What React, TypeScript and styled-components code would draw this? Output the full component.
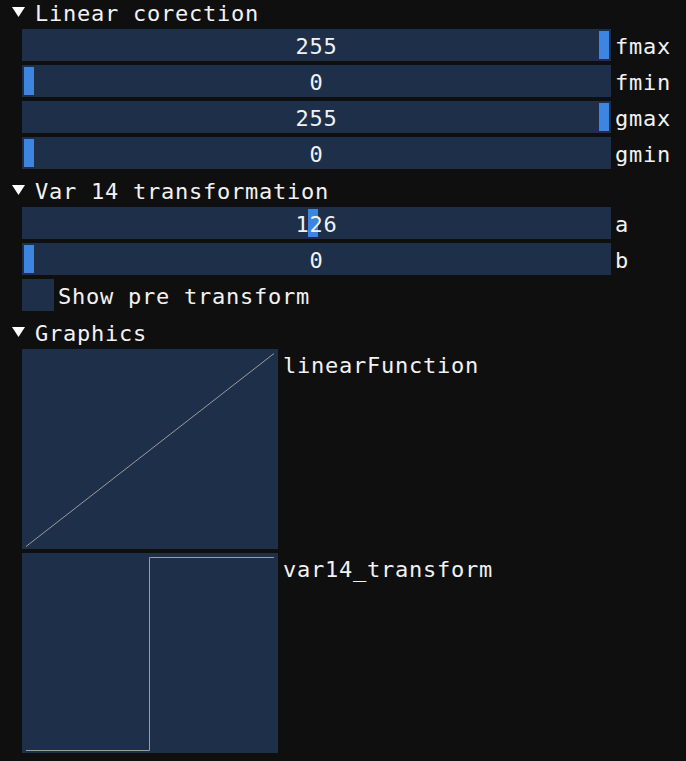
import React from "react";
import styled, { createGlobalStyle } from "styled-components";

const Global = createGlobalStyle`
  html, body { margin: 0; padding: 0; background: #0f0f0f; }
  body { width: 686px; height: 761px; overflow: hidden; }
`;

const FONT = `"DejaVu Sans Mono", "Liberation Mono", monospace`;

const Window = styled.div`
  width: 686px;
  height: 761px;
  background: #0f0f0f;
  color: #f2f2f2;
  font-family: ${FONT};
  font-size: 22px;
  letter-spacing: 0.76px;
  overflow: hidden;
`;

const Content = styled.div`
  display: flex;
  flex-direction: column;
  gap: 4px;
  margin-top: -5px;
`;

const Header = styled.div`
  height: 30px;
  display: flex;
  align-items: flex-start;
  padding-left: 12px;
  gap: 10px;
  box-sizing: border-box;
  overflow: hidden;
`;

const Arrow = styled.svg`
  width: 13px;
  height: 10px;
  margin-top: 12px;
  flex: none;
`;

const HeaderText = styled.span`
  line-height: 23px;
  padding-top: 7px;
  white-space: pre;
`;

const Row = styled.div`
  display: flex;
  align-items: flex-start;
  height: 32px;
  gap: 4px;
  padding-left: 22px;
`;

const Frame = styled.div`
  position: relative;
  width: 589px;
  height: 32px;
  background: rgb(29, 47, 73);
  flex: none;
`;

const Grab = styled.div`
  position: absolute;
  top: 2px;
  bottom: 2px;
  width: 10px;
  background: #3d85e0;
`;

const Value = styled.div`
  position: absolute;
  inset: 0;
  text-align: center;
  line-height: 29px;
  padding-top: 3px;
  white-space: pre;
`;

const Label = styled.span`
  line-height: 29px;
  padding-top: 3px;
  white-space: pre;
`;

const Check = styled.div`
  width: 32px;
  height: 32px;
  background: rgb(29, 47, 73);
  flex: none;
`;

const PlotRow = styled.div`
  display: flex;
  align-items: flex-start;
  gap: 5px;
  padding-left: 22px;
`;

const PlotFrame = styled.svg`
  width: 256px;
  height: 200px;
  background: rgb(29, 47, 73);
  display: block;
  flex: none;
`;

const PlotLabel = styled.span`
  line-height: 24px;
  margin-top: 5px;
  white-space: pre;
`;

const HeaderArrow = () => (
  <Arrow viewBox="0 0 13 10">
    <polygon points="0,0 13,0 6.5,10" fill="#ffffff" />
  </Arrow>
);

const Section: React.FC<{ title: string; children: React.ReactNode }> = ({ title, children }) => (
  <>
    <Header>
      <HeaderArrow />
      <HeaderText>{title}</HeaderText>
    </Header>
    {children}
  </>
);

const Slider: React.FC<{ value: number; min?: number; max?: number; label: string }> = ({
  value,
  min = 0,
  max = 255,
  label,
}) => {
  const t = (value - min) / (max - min);
  const left = 2 + t * (589 - 4 - 10);
  return (
    <Row>
      <Frame>
        <Grab style={{ left: `${left}px` }} />
        <Value>{value}</Value>
      </Frame>
      <Label>{label}</Label>
    </Row>
  );
};

const W = 256;
const H = 200;
const PX0 = 4;
const PX1 = 252;
const PY0 = 4.5;
const PY1 = 197.5;

const toPoints = (vals: number[]) =>
  vals
    .map((v, i) => {
      const x = PX0 + (i / (vals.length - 1)) * (PX1 - PX0);
      const y = PY1 - (v / 255) * (PY1 - PY0);
      return `${x.toFixed(2)},${y.toFixed(2)}`;
    })
    .join(" ");

const Plot: React.FC<{ points: string; label: string }> = ({ points, label }) => (
  <PlotRow>
    <PlotFrame viewBox={`0 0 ${W} ${H}`}>
      <polyline points={points} fill="none" stroke="#9c9c9c" strokeWidth={1} />
    </PlotFrame>
    <PlotLabel>{label}</PlotLabel>
  </PlotRow>
);

export default function App() {
  const linear = toPoints([0, 255]);
  const stepX = 127.5;
  const step = `${PX0},${PY1} ${stepX},${PY1} ${stepX},${PY0} ${PX1},${PY0}`;
  return (
    <Window>
      <Global />
      <Content>
        <Section title="Linear corection">
          <Slider value={255} label="fmax" />
          <Slider value={0} label="fmin" />
          <Slider value={255} label="gmax" />
          <Slider value={0} label="gmin" />
        </Section>
        <Section title="Var 14 transformation">
          <Slider value={126} label="a" />
          <Slider value={0} label="b" />
          <Row>
            <Check />
            <Label>Show pre transform</Label>
          </Row>
        </Section>
        <Section title="Graphics">
          <Plot points={linear} label="linearFunction" />
          <Plot points={step} label="var14_transform" />
        </Section>
      </Content>
    </Window>
  );
}
